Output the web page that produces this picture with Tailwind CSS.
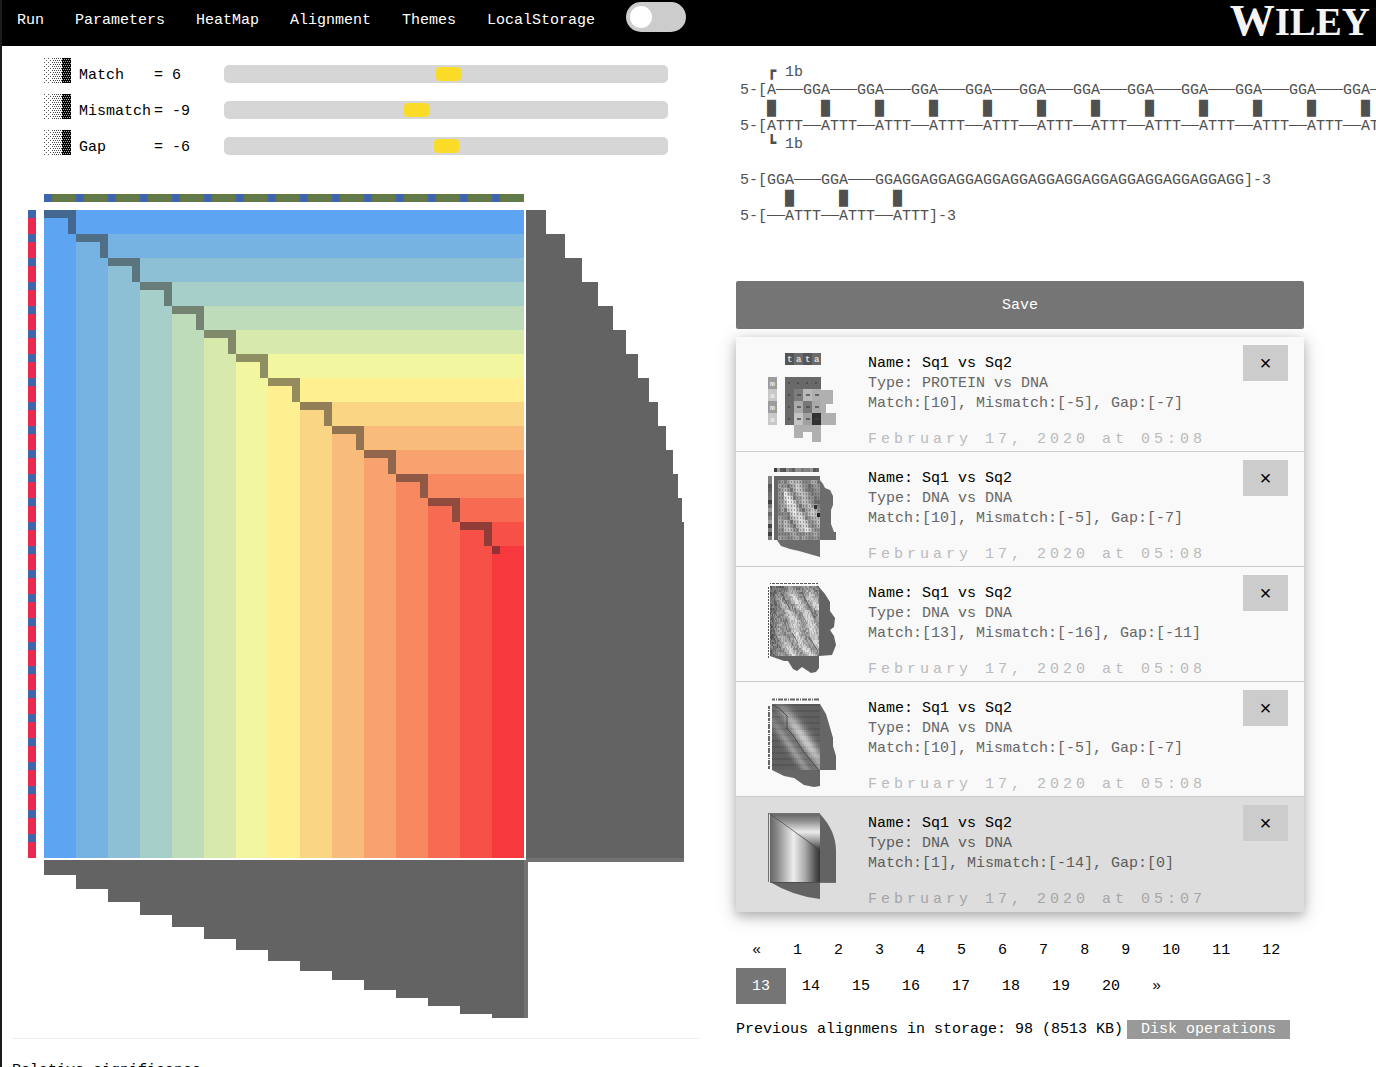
<!DOCTYPE html>
<html lang="en">
<head>
<meta charset="utf-8">
<title>Sequence alignment</title>
<script src="https://cdn.jsdelivr.net/npm/@tailwindcss/browser@4"></script>
</head>
<body class="overflow-x-hidden border-l-2 border-[#1c1c1c] bg-white font-['Liberation_Mono',monospace] text-[15px] leading-5 text-black">

<header class="flex h-[46px] items-start justify-between bg-black pl-[15px] text-white">
  <nav class="flex h-full items-start gap-[31px] font-medium">
    <a href="#run" class="pt-[11px]">Run</a>
    <a href="#parameters" class="pt-[11px]">Parameters</a>
    <a href="#heatmap" class="pt-[11px]">HeatMap</a>
    <a href="#alignment" class="pt-[11px]">Alignment</a>
    <a href="#themes" class="pt-[11px]">Themes</a>
    <a href="#storage" class="pt-[11px]">LocalStorage</a>
    <input type="checkbox" aria-label="Dark mode" class="mt-0.5 flex h-[30px] w-[60px] appearance-none items-center rounded-full bg-[#ccc] pl-1 before:size-[22px] before:rounded-full before:bg-white before:content-['']">
  </nav>
  <a href="#wiley" class="pr-1.5 font-['Liberation_Serif',serif] text-[39px] leading-10 font-bold text-[#f4f4f4]"><span class="text-[45px]">W</span>ILEY</a>
</header>

<svg class="absolute size-0" aria-hidden="true">
  <defs>
    <pattern id="light" width="4" height="4" patternUnits="userSpaceOnUse"><path d="M0 0h1v1H0zM2 2h1v1H2z" fill="#555"/></pattern>
    <pattern id="medium" width="2" height="4" patternUnits="userSpaceOnUse"><path d="M0 0h1v1H0zM1 2h1v1H1z" fill="#444"/></pattern>
    <pattern id="dark" width="2" height="4" patternUnits="userSpaceOnUse"><path d="M0 0h2v4H0z"/><path d="M0 1h1v1H0zM1 3h1v1H1z" fill="#aaa"/></pattern>
    <symbol id="shade" viewBox="0 0 27 25"><path d="M0 0h9v25H0z" fill="url(#light)"/><path d="M9 0h9v25H9z" fill="url(#medium)"/><path d="M18 0h9v25h-9z" fill="url(#dark)"/></symbol>
  </defs>
</svg>

<main class="flex">
  <section class="ml-2.5 w-1/2 shrink-0">
    <div class="flex flex-col pt-2.5 pr-[31px] pl-8">
      <div class="flex h-9">
        <svg class="mt-0.5 mr-2 h-[25px] w-[27px]"><use href="#shade"/></svg>
        <label for="match" class="mt-2.5 w-[75px]">Match</label>
        <output class="mt-2.5 w-[70px]">= 6</output>
        <input id="match" type="range" min="-500" max="500" value="6" class="mt-[9px] h-[18px] min-w-0 flex-1 appearance-none rounded-[5px] bg-[#d6d6d6] [&::-webkit-slider-thumb]:h-3.5 [&::-webkit-slider-thumb]:w-[25px] [&::-webkit-slider-thumb]:appearance-none [&::-webkit-slider-thumb]:rounded [&::-webkit-slider-thumb]:bg-[#fadb28]">
      </div>
      <div class="flex h-9">
        <svg class="mt-0.5 mr-2 h-[25px] w-[27px]"><use href="#shade"/></svg>
        <label for="mismatch" class="mt-2.5 w-[75px]">Mismatch</label>
        <output class="mt-2.5 w-[70px]">= -9</output>
        <input id="mismatch" type="range" min="-64" max="64" value="-9" class="mt-[9px] h-[18px] min-w-0 flex-1 appearance-none rounded-[5px] bg-[#d6d6d6] [&::-webkit-slider-thumb]:h-3.5 [&::-webkit-slider-thumb]:w-[25px] [&::-webkit-slider-thumb]:appearance-none [&::-webkit-slider-thumb]:rounded [&::-webkit-slider-thumb]:bg-[#fadb28]">
      </div>
      <div class="flex h-9">
        <svg class="mt-0.5 mr-2 h-[25px] w-[27px]"><use href="#shade"/></svg>
        <label for="gap" class="mt-2.5 w-[75px]">Gap</label>
        <output class="mt-2.5 w-[70px]">= -6</output>
        <input id="gap" type="range" min="-30" max="18" value="-6" class="mt-[9px] h-[18px] min-w-0 flex-1 appearance-none rounded-[5px] bg-[#d6d6d6] [&::-webkit-slider-thumb]:h-3.5 [&::-webkit-slider-thumb]:w-[25px] [&::-webkit-slider-thumb]:appearance-none [&::-webkit-slider-thumb]:rounded [&::-webkit-slider-thumb]:bg-[#fadb28]">
      </div>
    </div>
    <svg id="map" role="img" aria-label="Alignment heat map" class="mt-[30px] ml-4 block h-[824px] w-[656px]" viewBox="0 0 656 824" shape-rendering="crispEdges"></svg>
    <hr class="mt-5 border-[#eee]">
    <p class="mt-[22px]">Relative significance</p>
  </section>

  <section class="min-w-0 flex-1 pl-[37px]">
    <pre id="alignment" class="overflow-hidden pt-[18px] pl-1 font-['Liberation_Mono',monospace] leading-[18px] text-[#505050]">   ┏ 1b
5-[A───GGA───GGA───GGA───GGA───GGA───GGA───GGA───GGA───GGA───GGA───GGA───GGA
   █     █     █     █     █     █     █     █     █     █     █     █     █
5-[ATTT──ATTT──ATTT──ATTT──ATTT──ATTT──ATTT──ATTT──ATTT──ATTT──ATTT──ATTT──A
   ┗ 1b

5-[GGA───GGA───GGAGGAGGAGGAGGAGGAGGAGGAGGAGGAGGAGGAGGAGG]-3
     █     █     █
5-[──ATTT──ATTT──ATTT]-3</pre>

    <div class="mr-[72px]">
      <button class="mt-[55px] h-12 w-full rounded-xs bg-[#757575] pt-0.5 font-medium text-white">Save</button>

      <ul class="mt-2 shadow-[0_4px_10px_rgba(0,0,0,0.2),0_4px_20px_rgba(0,0,0,0.19)]">
        <li class="flex h-[115px] border-b border-[#ccc] bg-[#f9f9f9] px-4 text-[#666]">
          <svg id="t0" class="ml-4 h-[114px] w-[68px] shrink-0" viewBox="0 0 68 114"></svg>
          <div class="flex-1 pt-[17px] pl-8 whitespace-nowrap">
            <p class="text-black">Name: Sq1 vs Sq2</p><p>Type: PROTEIN vs DNA</p><p>Match:[10], Mismatch:[-5], Gap:[-7]</p>
            <p class="mt-4 tracking-[4px] text-[#bbb]">February 17, 2020 at 05:08</p>
          </div>
          <button aria-label="Delete" class="mt-2 h-9 w-[45px] shrink-0 bg-[#ccc] pt-1 text-xl text-black">×</button>
        </li>
        <li class="flex h-[115px] border-b border-[#ccc] bg-[#f9f9f9] px-4 text-[#666]">
          <svg id="t1" class="ml-4 h-[114px] w-[68px] shrink-0" viewBox="0 0 68 114"></svg>
          <div class="flex-1 pt-[17px] pl-8 whitespace-nowrap">
            <p class="text-black">Name: Sq1 vs Sq2</p><p>Type: DNA vs DNA</p><p>Match:[10], Mismatch:[-5], Gap:[-7]</p>
            <p class="mt-4 tracking-[4px] text-[#bbb]">February 17, 2020 at 05:08</p>
          </div>
          <button aria-label="Delete" class="mt-2 h-9 w-[45px] shrink-0 bg-[#ccc] pt-1 text-xl text-black">×</button>
        </li>
        <li class="flex h-[115px] border-b border-[#ccc] bg-[#f9f9f9] px-4 text-[#666]">
          <svg id="t2" class="ml-4 h-[114px] w-[68px] shrink-0" viewBox="0 0 68 114"></svg>
          <div class="flex-1 pt-[17px] pl-8 whitespace-nowrap">
            <p class="text-black">Name: Sq1 vs Sq2</p><p>Type: DNA vs DNA</p><p>Match:[13], Mismatch:[-16], Gap:[-11]</p>
            <p class="mt-4 tracking-[4px] text-[#bbb]">February 17, 2020 at 05:08</p>
          </div>
          <button aria-label="Delete" class="mt-2 h-9 w-[45px] shrink-0 bg-[#ccc] pt-1 text-xl text-black">×</button>
        </li>
        <li class="flex h-[115px] border-b border-[#ccc] bg-[#f9f9f9] px-4 text-[#666]">
          <svg id="t3" class="ml-4 h-[114px] w-[68px] shrink-0" viewBox="0 0 68 114"></svg>
          <div class="flex-1 pt-[17px] pl-8 whitespace-nowrap">
            <p class="text-black">Name: Sq1 vs Sq2</p><p>Type: DNA vs DNA</p><p>Match:[10], Mismatch:[-5], Gap:[-7]</p>
            <p class="mt-4 tracking-[4px] text-[#bbb]">February 17, 2020 at 05:08</p>
          </div>
          <button aria-label="Delete" class="mt-2 h-9 w-[45px] shrink-0 bg-[#ccc] pt-1 text-xl text-black">×</button>
        </li>
        <li class="flex h-[115px] bg-[#ddd] px-4 text-[#5c5c5c]">
          <svg id="t4" class="ml-4 h-[114px] w-[68px] shrink-0" viewBox="0 0 68 114"></svg>
          <div class="flex-1 pt-[17px] pl-8 whitespace-nowrap">
            <p class="text-black">Name: Sq1 vs Sq2</p><p>Type: DNA vs DNA</p><p>Match:[1], Mismatch:[-14], Gap:[0]</p>
            <p class="mt-4 tracking-[4px] text-[#a6a6a6]">February 17, 2020 at 05:07</p>
          </div>
          <button aria-label="Delete" class="mt-2 h-9 w-[45px] shrink-0 bg-[#ccc] pt-1 text-xl text-black">×</button>
        </li>
      </ul>

      <nav aria-label="Pages" class="mt-5 flex flex-wrap leading-[38px]">
        <a href="#prev" class="h-9 px-4">«</a><a href="#p1" class="h-9 px-4">1</a><a href="#p2" class="h-9 px-4">2</a><a href="#p3" class="h-9 px-4">3</a><a href="#p4" class="h-9 px-4">4</a><a href="#p5" class="h-9 px-4">5</a><a href="#p6" class="h-9 px-4">6</a><a href="#p7" class="h-9 px-4">7</a><a href="#p8" class="h-9 px-4">8</a><a href="#p9" class="h-9 px-4">9</a><a href="#p10" class="h-9 px-4">10</a><a href="#p11" class="h-9 px-4">11</a><a href="#p12" class="h-9 px-4">12</a><a href="#p13" aria-current="page" class="h-9 bg-[#757575] px-4 text-white">13</a><a href="#p14" class="h-9 px-4">14</a><a href="#p15" class="h-9 px-4">15</a><a href="#p16" class="h-9 px-4">16</a><a href="#p17" class="h-9 px-4">17</a><a href="#p18" class="h-9 px-4">18</a><a href="#p19" class="h-9 px-4">19</a><a href="#p20" class="h-9 px-4">20</a><a href="#next" class="h-9 px-4">»</a>
      </nav>

      <div class="mt-4 flex items-start gap-1 whitespace-nowrap">
        <span>Previous alignmens in storage: 98 (8513 KB)</span>
        <button class="h-[19px] bg-[#999] px-3.5 leading-5 text-white">Disk operations</button>
      </div>
    </div>
  </section>
</main>

<script>
const rect = (x, y, w, h, c, o = 1) => `<rect x="${x}" y="${y}" width="${w}" height="${h}" fill="${c}" fill-opacity="${o}"/>`;
const poly = (p, c) => `<polygon points="${p}" fill="${c}"/>`;
const gray = v => { v = Math.max(20, Math.min(240, Math.round(v))); return `rgb(${v},${v},${v})`; };
let seed = 7;
const rnd = () => (seed = (seed * 16807) % 2147483647) / 2147483647;
const put = (id, s) => document.getElementById(id).innerHTML = s;

// Main heat map: nested score levels, traceback path and the two profiles
const levels = ['#5da5f3','#76b2e2','#8dc0d5','#a6cfc9','#bedcba','#d7eaac','#f2f79f','#feef90','#fad584','#f8bb79','#f8a26f','#f78860','#f76b52','#f65047','#f7383c'];
const rowEnds = [20,39,56,72,87,100,112,123,132,140,147,152,156,158];
const colEnds = [15,29,42,55,67,79,90,101,111,120,130,138,146,154,158];
let m = rect(16, 0, 480, 8, '#627a47') + rect(0, 16, 8, 648, '#ea2950');
for (let i = 0; i < 15; i++) m += rect(16 + 32 * i, 0, 8, 8, '#4164ae');
for (let i = 0; i < 27; i++) m += rect(0, 16 + 24 * i, 8, 8, '#4164ae');
levels.forEach((c, i) => m += rect(16 + 32 * i, 16 + 24 * i, 480 - 32 * i, 648 - 24 * i, c));
for (let i = 0; i < 14; i++) m += `<path d="M${16 + 32 * i} ${16 + 24 * i}h32v24h-8v-16h-24z" fill="#2a2a2a" fill-opacity=".5"/>`;
m += rect(464, 352, 8, 8, '#2a2a2a', .5);
rowEnds.forEach((w, i) => m += rect(498, 16 + 24 * i, w, i < 13 ? 24 : 336, '#636363'));
colEnds.forEach((h, i) => m += rect(16 + 32 * i, 666, 32, h, '#636363'));
m += rect(498, 664, 158, 4, '#737373') + rect(496, 666, 4, 158, '#737373');
put('map', m);

// Short protein thumbnail
const cells = [[105,105,105,105],[105,125,185,175],[105,170,120,170],[105,195,160,50]];
let s = '';
for (let i = 0; i < 4; i++) {
  s += rect(17 + i * 9, 16, 9, 12, i % 2 ? '#6b6b6b' : '#555') + rect(0, 40 + i * 12, 9, 12, i % 2 ? '#c8c8c8' : '#9c9c9c');
  s += `<text x="${19 + i * 9}" y="25" font-size="9" font-weight="bold" font-family="Liberation Mono" fill="#ddd">${'tata'[i]}</text><text x="2" y="${49 + i * 12}" font-size="8" font-weight="bold" font-family="Liberation Mono" fill="#eee">${'mama'[i]}</text>`;
  for (let j = 0; j < 4; j++) s += rect(17 + j * 9, 40 + i * 12, 9, 12, gray(cells[i][j])) + rect(20 + j * 9, 45 + i * 12, cells[i][j] === 105 ? 2 : 4, 2, '#444', .7);
}
s += poly('53,53 65,53 65,67 58,67 58,76 68,76 68,88 53,88', '#b0b0b0') + poly('26,88 53,88 53,105 44,105 44,95 35,95 35,101 26,101', '#b0b0b0');
put('t0', s);

// Cell grid thumbnail
s = poly('52,28 55,32 57,36 62,38 65,44 65,53 63,58 63,72 66,80 68,80 68,88 52,88', '#6c6c6c') + poly('9,88 13,94 22,97 31,99 52,105 52,88', '#6c6c6c');
s += rect(6, 24, 46, 64, '#666');
for (let j = 0; j < 15; j++) s += rect(6 + j * 3, 16, 3, 4, gray(60 + rnd() * 110));
for (let i = 0; i < 16; i++) {
  s += rect(0, 24 + i * 4, 4, 4, gray(50 + rnd() * 110));
  for (let j = 1; j < 15; j++) {
    if (i < 1) continue;
    const d = Math.abs(j - i * .8);
    const near = Math.abs(Math.sin(i * .4 - j * .5 + 1.2));
    const v = j < 3 || i > 13 ? 130 : 110 + near * 95 - d * 6;
    s += rect(7 + j * 3, 24 + i * 4, 3, 4, gray(Math.max(105, v) + rnd() * 40)) + rect(8 + j * 3, 25 + i * 4, 1, 2, '#555', .5);
  }
}
s += rect(46, 53, 3, 4, '#333') + rect(49, 61, 3, 4, '#222');
put('t1', s);

// Dense thumbnail with diagonal streaks
s = poly('51,20 57,27 62,35 62,44 67,51 66,60 62,63 66,69 68,78 64,88 51,89', '#636363') + poly('2,89 16,94 20,94 25,102 29,104 34,100 43,106 48,105 51,101 51,89', '#636363');
s += rect(2, 19, 49, 70, '#666');
for (let i = 0; i < 35; i++) for (let j = 0; j < 49; j++) {
  const u = j * .9 - i * .9;
  const edge = Math.min(1, (j + 3) / 22) * Math.min(1, (i + 4) / 9);
  const v = 95 + edge * (80 + 30 * Math.sin(u * .42 + Math.sin(i * .3) * .9)) + (rnd() - .5) * 60;
  s += rect(2 + j, 19 + i * 2, 1, 2, gray(v));
}
for (let i = 0; i < 24; i++) s += rect(2 + i * 2, 16, 1 + (i % 2), 1, '#555');
for (let i = 0; i < 24; i++) s += rect(0, 20 + i * 3, 1, 2, '#555');
s += `<path d="M34 25L46 50M47 43v13M13 26l10 18M41 70l9 14M24 66l6 10" stroke="#444" stroke-opacity=".7"/>`;
put('t2', s);

// Smooth thumbnail with a traceback line
s = poly('52,22 58,32 61,42 65,56 65,64 68,74 68,88 52,88', '#666') + poly('4,88 16,94 26,96 36,103 46,105 52,104 52,88', '#666');
s += rect(4, 22, 48, 66, '#666');
for (let i = 0; i < 33; i++) for (let j = 0; j < 24; j++) {
  const x = j / 23, y = i / 32, d = x - y * .95;
  const a = Math.exp(-((d - .17) ** 2) / .03), b = Math.exp(-((d + .24) ** 2) / .014);
  const v = 96 + 105 * a * Math.sin(Math.PI * Math.min(1, y + .12) * .75) + 60 * b * Math.sin(Math.PI * y * .7) + (i % 3 ? 0 : -10);
  s += rect(4 + j * 2, 22 + i * 2, 2, 2, gray(v));
}
s += `<path d="M5 23l7 4 7 7v13l5 5 11 17 13 16 3 4" fill="none" stroke="#3c3c3c" stroke-opacity=".8"/><path d="M4 17.500h48M1 24v64" stroke="#666" stroke-width="2" stroke-dasharray="3 1 1 1 5 1"/>`;
put('t3', s);

// Gradient thumbnail of the selected entry
s = `<defs><linearGradient id="across"><stop offset="0" stop-color="#666"/><stop offset=".15" stop-color="#8a8a8a"/><stop offset=".47" stop-color="#eee"/><stop offset=".7" stop-color="#aaa"/><stop offset=".9" stop-color="#555"/><stop offset="1" stop-color="#333"/></linearGradient>
<linearGradient id="down" x2="0" y2="1"><stop offset="0" stop-color="#666"/><stop offset=".2" stop-color="#909090"/><stop offset=".5" stop-color="#ececec"/><stop offset=".75" stop-color="#999"/><stop offset="1" stop-color="#3a3a3a"/></linearGradient></defs>
<path d="M52 17Q68 34 68 54V85H52z" fill="#636363"/><path d="M2 85H52V102Q25 99 2 85z" fill="#636363"/>
<path d="M2 17H52V85H2z" fill="url(#across)"/><path d="M2 17H52V53z" fill="url(#down)"/><path d="M2 17L52 53M.500 17v68M0 16.500h52M2 85.500h66" fill="none" stroke="#444" stroke-opacity=".7"/>`;
put('t4', s);
</script>
</body>
</html>
